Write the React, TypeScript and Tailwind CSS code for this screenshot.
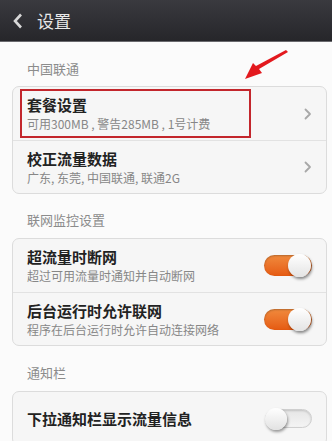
import React from "react";

const font = { fontFamily: '"Noto Sans CJK SC", "Noto Sans", sans-serif' };

function Chevron() {
  return (
    <svg width="8" height="12" viewBox="0 0 8 12" className="shrink-0">
      <path d="M1.5 1.5 L6 6 L1.5 10.5" fill="none" stroke="#a8a8a8" strokeWidth="1.8" strokeLinecap="round" strokeLinejoin="round" />
    </svg>
  );
}

function Toggle({ on }: { on: boolean }) {
  return on ? (
    <div className="relative h-[21px] w-[48px] rounded-full bg-gradient-to-b from-[#f08a3c] to-[#e55a10] shadow-[inset_0_1px_2px_rgba(0,0,0,0.25)]">
      <div className="absolute right-[1px] top-[-1px] h-[23px] w-[23px] rounded-full bg-gradient-to-b from-[#ffffff] to-[#e4e4e4] shadow-[1px_2px_3px_rgba(0,0,0,0.45)]" />
    </div>
  ) : (
    <div className="relative h-[19px] w-[47px] rounded-full border border-[#cfcfcf] bg-gradient-to-b from-[#e6e6e6] to-[#f4f4f4] shadow-[inset_0_1px_2px_rgba(0,0,0,0.15)]">
      <div className="absolute left-[-1px] top-[-2px] h-[22px] w-[22px] rounded-full bg-gradient-to-b from-[#ffffff] to-[#e2e2e2] shadow-[1px_2px_3px_rgba(0,0,0,0.4)]" />
    </div>
  );
}

function Row({
  title,
  sub,
  right,
  border,
  boxed,
}: {
  title: string;
  sub?: string;
  right: React.ReactNode;
  border?: boolean;
  boxed?: boolean;
}) {
  return (
    <div className={`flex h-[53px] items-center pl-[8px] pr-[14px] ${border ? "border-t border-[#e2e2e2]" : ""}`}>
      <div className="flex flex-1 flex-col justify-center">
        <div
          className={
            boxed
              ? "-ml-[1px] flex h-[49px] w-[231px] flex-col justify-center border-[2px] border-[#c3262c] pl-[5px]"
              : "flex flex-col justify-center pl-[6px]"
          }
        >
          <div className="text-[15px] font-bold leading-[20px] text-[#222]">{title}</div>
          {sub && <div className="text-[12px] leading-[17px] text-[#878787]">{sub}</div>}
        </div>
      </div>
      {right}
    </div>
  );
}

export default function App() {
  return (
    <div className="relative h-[441px] w-[332px] overflow-hidden bg-[#fbfbfb]" style={font}>
      <div className="flex h-[41px] items-center bg-gradient-to-b from-[#3a3a3f] to-[#26262a] pl-[13px]">
        <svg width="10" height="16" viewBox="0 0 10 16">
          <path d="M8 1.5 L2 8 L8 14.5" fill="none" stroke="#d8d8d8" strokeWidth="2.6" strokeLinejoin="miter" />
        </svg>
        <span className="ml-[14px] text-[17px] text-[#e8e8e8]">设置</span>
      </div>
      <div className="h-[1px] bg-[#6a6a6e]" />

      <div className="pl-[27px] pt-[17px] text-[13px] leading-[20px] text-[#8c8c8c]">中国联通</div>
      <div className="mx-[12px] mt-[7px] mr-[5px] rounded-[7px] border border-[#dcdcdc] bg-[#f6f6f6]">
        <Row title="套餐设置" sub="可用300MB , 警告285MB , 1号计费" right={<Chevron />} boxed />
        <Row title="校正流量数据" sub="广东, 东莞, 中国联通, 联通2G" right={<Chevron />} border />
      </div>

      <div className="pl-[27px] pt-[16px] text-[13px] leading-[20px] text-[#8c8c8c]">联网监控设置</div>
      <div className="mx-[12px] mt-[8px] mr-[5px] rounded-[7px] border border-[#dcdcdc] bg-[#f6f6f6]">
        <Row title="超流量时断网" sub="超过可用流量时通知并自动断网" right={<Toggle on />} />
        <Row title="后台运行时允许联网" sub="程序在后台运行时允许自动连接网络" right={<Toggle on />} border />
      </div>

      <div className="pl-[27px] pt-[17px] text-[13px] leading-[20px] text-[#8c8c8c]">通知栏</div>
      <div className="mx-[12px] mt-[8px] mr-[5px] rounded-[7px] border border-[#dcdcdc] bg-[#f6f6f6]">
        <Row title="下拉通知栏显示流量信息" right={<Toggle on={false} />} />
      </div>

      <svg className="absolute left-[240px] top-[48px]" width="52" height="36" viewBox="0 0 52 36">
        <path d="M48 4 L19 21 L22 25 L5 31 L13 15 L16 18 L46 2 Z" fill="#e3191e" />
      </svg>
    </div>
  );
}
